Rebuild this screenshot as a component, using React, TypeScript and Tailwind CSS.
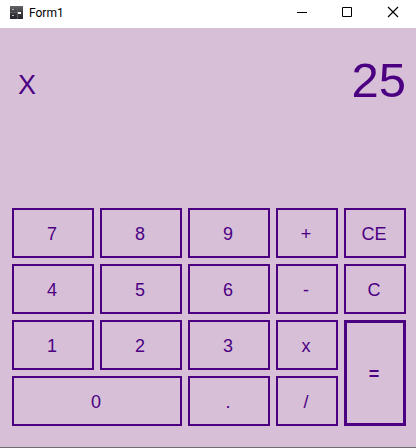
import type { ReactNode } from "react";

type Key = { label: string; name: string; className?: string };

const keys: Key[] = [
  { label: "7", name: "Seven" },
  { label: "8", name: "Eight" },
  { label: "9", name: "Nine" },
  { label: "+", name: "Add" },
  { label: "CE", name: "Clear entry" },
  { label: "4", name: "Four" },
  { label: "5", name: "Five" },
  { label: "6", name: "Six" },
  { label: "-", name: "Subtract" },
  { label: "C", name: "Clear" },
  { label: "1", name: "One" },
  { label: "2", name: "Two" },
  { label: "3", name: "Three" },
  { label: "x", name: "Multiply" },
  { label: "=", name: "Equals", className: "row-span-2 border-3 font-bold" },
  { label: "0", name: "Zero", className: "col-span-2" },
  { label: ".", name: "Decimal point" },
  { label: "/", name: "Divide" },
];

function AppIcon() {
  return (
    <svg width="13" height="13" viewBox="0 0 13 13" aria-hidden="true" shapeRendering="crispEdges">
      <defs>
        <linearGradient id="case" x1="0" y1="0" x2="0" y2="1">
          <stop offset="0" stopColor="#66666a" />
          <stop offset="0.5" stopColor="#3c3c40" />
          <stop offset="1" stopColor="#252529" />
        </linearGradient>
      </defs>
      <rect width="13" height="13" fill="url(#case)" />
      <path d="M7 0h1v13h-1zM0 6h7v1h-7z" fill="#5c5c61" />
      <path d="M2 3h2v1h-2zM2 9h2v1h-2z" fill="#b9b9bd" />
      <path d="M8 6h3v2h-3z" fill="#f4f4f4" />
    </svg>
  );
}

function WindowButton({ name, children }: { name: string; children: ReactNode }) {
  return (
    <button type="button" aria-label={name} className="flex h-6 w-[46px] items-center justify-center">
      <svg width="12" height="12" viewBox="0 0 12 12" fill="none" stroke="#000" aria-hidden="true">
        {children}
      </svg>
    </button>
  );
}

export default function App() {
  return (
    <div className="flex min-h-screen flex-col border-b border-[#707070] bg-[#d8bfd8] font-['Liberation_Sans',Arial,sans-serif] text-[#4b0082]">
      <header className="flex h-7 items-start justify-between bg-white text-black">
        <div className="flex h-6 items-center gap-1.5 pl-[10px]">
          <AppIcon />
          <h1 className="pt-0.5 font-[Roboto,'Open_Sans',sans-serif] text-xs">Form1</h1>
        </div>
        <div className="flex">
          <WindowButton name="Minimize">
            <path d="M2 6.5h10" />
          </WindowButton>
          <WindowButton name="Maximize">
            <path d="M1.5 1.5h9v9h-9z" />
          </WindowButton>
          <WindowButton name="Close">
            <path d="M1 1l10 10M11 1l-10 10" strokeWidth="1.2" />
          </WindowButton>
        </div>
      </header>

      <main className="flex flex-1 flex-col justify-between pt-6 pr-[10px] pb-[21px] pl-3">
        <div className="flex items-center justify-between pl-[6px]">
          <span className="pt-[10px] text-[27px] leading-8">X</span>
          <output className="text-[49px] leading-14">25</output>
        </div>

        <div className="grid auto-rows-[50px] grid-cols-[82fr_82fr_82fr_62fr_62fr] gap-1.5">
          {keys.map((key) => (
            <button
              key={key.label}
              type="button"
              aria-label={key.name}
              className={`${key.className ?? ""} border-[#4b0082] pt-0.5 pr-0.5 text-lg ${key.label === "=" ? "" : "border-2"}`}
            >
              {key.label}
            </button>
          ))}
        </div>
      </main>
    </div>
  );
}
